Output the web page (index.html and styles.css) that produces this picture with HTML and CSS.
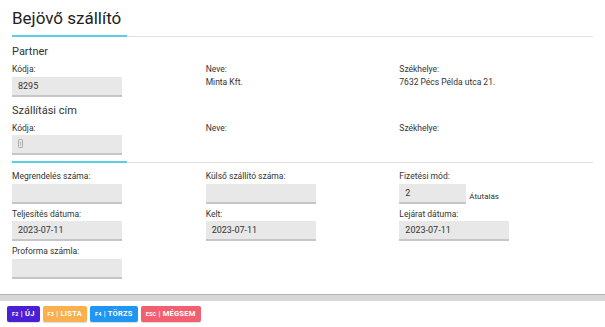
FILE: index.html
```html
<!DOCTYPE html>
<html lang="hu">
<head>
  <meta charset="UTF-8">
  <meta name="viewport" content="width=device-width, initial-scale=1.0">
  <title>Bejövő szállító</title>
  <link rel="stylesheet" href="styles.css">
</head>
<body>
  <div class="panel">
    <h1 class="title">Bejövő szállító</h1>
    <div class="divider"><span></span></div>

    <h3 class="section">Partner</h3>
    <div class="row">
      <div class="field">
        <label>Kódja:</label>
        <div class="input">8295</div>
      </div>
      <div class="field">
        <label>Neve:</label>
        <div class="value">Minta Kft.</div>
      </div>
      <div class="field">
        <label>Székhelye:</label>
        <div class="value">7632 Pécs Példa utca 21.</div>
      </div>
    </div>

    <h3 class="section">Szállítási cím</h3>
    <div class="row">
      <div class="field">
        <label>Kódja:</label>
        <div class="input">
          <svg class="ico" width="5" height="9" viewBox="0 0 5 9">
            <rect x="0.5" y="0.5" width="4" height="8" rx="0.8" fill="none" stroke="#aaa" stroke-width="1"/>
            <line x1="2.5" y1="2.5" x2="2.5" y2="6.5" stroke="#bbb" stroke-width="1"/>
          </svg>
        </div>
      </div>
      <div class="field">
        <label>Neve:</label>
      </div>
      <div class="field">
        <label>Székhelye:</label>
      </div>
    </div>

    <div class="divider second"><span></span></div>

    <div class="row grid">
      <div class="field">
        <label>Megrendelés száma:</label>
        <div class="input"></div>
      </div>
      <div class="field">
        <label>Külső szállító száma:</label>
        <div class="input"></div>
      </div>
      <div class="field">
        <label>Fizetési mód:</label>
        <div class="inline">
          <div class="input short">2</div>
          <span class="hint">Átutalás</span>
        </div>
      </div>

      <div class="field">
        <label>Teljesítés dátuma:</label>
        <div class="input">2023-07-11</div>
      </div>
      <div class="field">
        <label>Kelt:</label>
        <div class="input">2023-07-11</div>
      </div>
      <div class="field">
        <label>Lejárat dátuma:</label>
        <div class="input">2023-07-11</div>
      </div>

      <div class="field">
        <label>Proforma számla:</label>
        <div class="input"></div>
      </div>
    </div>
  </div>

  <div class="bar"></div>

  <div class="actions">
    <button class="btn purple"><small>F2</small> | ÚJ</button>
    <button class="btn orange"><small>F3</small> | LISTA</button>
    <button class="btn blue"><small>F4</small> | TÖRZS</button>
    <button class="btn red"><small>ESC</small> | MÉGSEM</button>
  </div>
</body>
</html>
```

FILE: styles.css
```css
body {
  font-family: Roboto, 'Liberation Sans', sans-serif;
  color: #333;
  background: #fff;
  margin: 0;
  padding: 0;
}

.panel {
  padding: 0 12px 8px;
}

.title {
  font-size: 17px;
  font-weight: 400;
  color: #222;
  margin: 0;
  padding-top: 8px;
  line-height: 21px;
  height: 28px;
}

.divider {
  height: 1px;
  background: #e2e2e2;
  margin-top: 0;
}

.divider span {
  display: block;
  width: 115px;
  height: 2px;
  position: relative;
  top: -1px;
  background: #5bd0e3;
}

.divider.second {
  margin: 7px 0 8px;
}

.section {
  font-size: 11px;
  font-weight: 400;
  color: #333;
  margin: 0;
  line-height: 14px;
  padding-top: 8px;
  margin-bottom: 5px;
}

.section + .row + .section {
  padding-top: 0;
}

.row {
  display: grid;
  grid-template-columns: repeat(3, 1fr);
  margin-bottom: 7px;
}

.grid {
  row-gap: 5px;
}

.field label {
  display: block;
  font-size: 8.5px;
  line-height: 11px;
  color: #333;
  margin-bottom: 1.5px;
}

.input {
  width: 104px;
  height: 18px;
  padding-left: 6px;
  background: #e8e8e8;
  border-bottom: 2px solid #c6c6c6;
  font-size: 9px;
  line-height: 18px;
  color: #333;
}

.input .ico {
  vertical-align: -1px;
}

.value {
  font-size: 8.5px;
  line-height: 11px;
  color: #333;
  margin-top: 1px;
}

.inline {
  display: flex;
  align-items: flex-end;
}

.input.short {
  width: 61px;
}

.hint {
  font-size: 8px;
  margin-left: 3px;
  line-height: 11px;
  padding-bottom: 2px;
}

.bar {
  height: 6px;
  background: #d7d7d7;
  border-top: 1px solid #b4b4b4;
}

.actions {
  display: flex;
  gap: 3px;
  padding: 5px 7px;
}

.btn {
  font-family: Roboto, 'Liberation Sans', sans-serif;
  border: none;
  border-radius: 2px;
  color: #fff;
  font-size: 7.5px;
  font-weight: 700;
  letter-spacing: 0.25px;
  height: 16px;
  padding: 0 5px;
  line-height: 16px;
  box-shadow: 0 1px 1px rgba(0, 0, 0, 0.15);
}

.btn small {
  font-size: 5.5px;
  letter-spacing: 0.2px;
}

.purple { background: #4b1fd4; }
.orange { background: #fbb04f; }
.blue { background: #2096f3; }
.red { background: #f25f70; }
```
